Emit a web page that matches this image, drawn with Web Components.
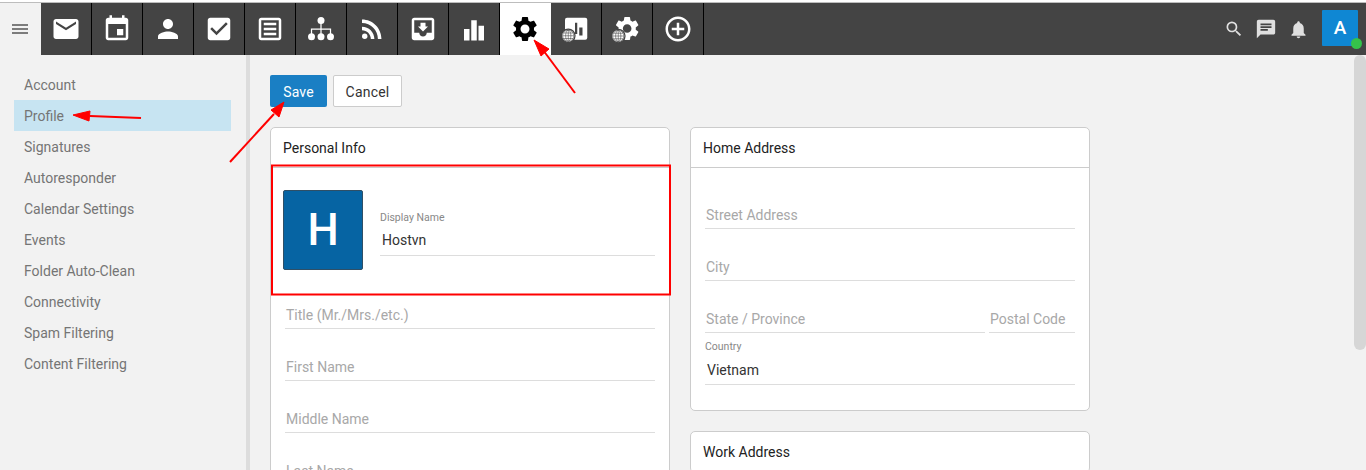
<!DOCTYPE html>
<html lang="en"><head><meta charset="utf-8"><title>Profile</title>
<style>
html,body{margin:0;height:470px;overflow:hidden;background:#f2f2f2;font-family:Roboto,"Liberation Sans",sans-serif;}
</style></head><body>
<app-shell>
  <top-bar slot="top">
    <nav-tab icon="mail"></nav-tab><nav-tab icon="event"></nav-tab><nav-tab icon="person"></nav-tab><nav-tab icon="check"></nav-tab><nav-tab icon="article"></nav-tab><nav-tab icon="tree"></nav-tab><nav-tab icon="rss"></nav-tab><nav-tab icon="inbox"></nav-tab><nav-tab icon="bars"></nav-tab><nav-tab icon="gear" active></nav-tab><nav-tab icon="report"></nav-tab><nav-tab icon="gearglobe"></nav-tab><nav-tab icon="add"></nav-tab>
  </top-bar>
  <side-menu slot="side">
    <menu-item>Account</menu-item><menu-item active>Profile</menu-item><menu-item>Signatures</menu-item><menu-item>Autoresponder</menu-item><menu-item>Calendar Settings</menu-item><menu-item>Events</menu-item><menu-item>Folder Auto-Clean</menu-item><menu-item>Connectivity</menu-item><menu-item>Spam Filtering</menu-item><menu-item>Content Filtering</menu-item>
  </side-menu>
  <profile-page slot="main">
    <form-card slot="left" title="Personal Info">
      <avatar-row><text-field style="--vb:6px" label="Display Name" value="Hostvn"></text-field></avatar-row>
      <div style="padding:7px 14px 0;display:block">
        <text-field placeholder="Title (Mr./Mrs./etc.)"></text-field>
        <text-field placeholder="First Name"></text-field>
        <text-field placeholder="Middle Name"></text-field>
        <text-field placeholder="Last Name"></text-field>
      </div>
    </form-card>
    <form-card slot="right" title="Home Address">
      <div style="padding:9px 14px 25px;display:block">
        <text-field placeholder="Street Address"></text-field>
        <text-field placeholder="City"></text-field>
        <div style="display:flex;gap:4px">
          <text-field style="flex:1" placeholder="State / Province"></text-field>
          <text-field style="width:86px" placeholder="Postal Code"></text-field>
        </div>
        <text-field label="Country" value="Vietnam"></text-field>
      </div>
    </form-card>
    <form-card slot="right" title="Work Address"></form-card>
  </profile-page>
</app-shell>
<script>
const P={
mail:'<path d="M20 4H4c-1.1 0-2 .9-2 2v12c0 1.1.9 2 2 2h16c1.1 0 2-.9 2-2V6c0-1.1-.9-2-2-2zm0 4l-8 5-8-5V6l8 5 8-5v2z"/>',
event:'<path d="M17 12h-5v5h5v-5zM16 1v2H8V1H6v2H5c-1.11 0-1.99.9-1.99 2L3 19c0 1.1.89 2 2 2h14c1.1 0 2-.9 2-2V5c0-1.1-.9-2-2-2h-1V1h-2zm3 18H5V8h14v11z"/>',
person:'<path d="M12 12c2.21 0 4-1.79 4-4s-1.79-4-4-4-4 1.79-4 4 1.79 4 4 4zm0 2c-2.67 0-8 1.34-8 4v2h16v-2c0-2.66-5.33-4-8-4z"/>',
check:'<path d="M19 3H5c-1.11 0-2 .9-2 2v14c0 1.1.89 2 2 2h14c1.11 0 2-.9 2-2V5c0-1.1-.89-2-2-2zm-9 14l-5-5 1.41-1.41L10 14.17l7.59-7.59L19 8l-9 9z"/>',
article:'<path d="M19 5v14H5V5h14m0-2H5c-1.1 0-2 .9-2 2v14c0 1.1.9 2 2 2h14c1.1 0 2-.9 2-2V5c0-1.1-.9-2-2-2zM7 7h10v2H7zM7 11h10v2H7zM7 15h10v2H7z"/>',
tree:'<circle cx="12" cy="5.2" r="2.8"/><circle cx="4.4" cy="18.2" r="2.8"/><circle cx="12" cy="18.2" r="2.8"/><circle cx="19.6" cy="18.2" r="2.8"/><path d="M11.5 7h1v4.6h7.6V16h-1v-3.4h-6.6V16h-1v-3.4H4.9V16h-1v-4.4h7.6z"/>',
rss:'<circle cx="6.18" cy="17.82" r="2.18"/><path d="M4 4.44v2.83c7.03 0 12.73 5.7 12.73 12.73h2.83c0-8.59-6.97-15.56-15.56-15.56zm0 5.66v2.83c3.9 0 7.07 3.17 7.07 7.07h2.83c0-5.47-4.43-9.9-9.9-9.9z"/>',
inbox:'<path d="M19 3H5c-1.1 0-2 .9-2 2v14c0 1.1.9 2 2 2h14c1.1 0 2-.9 2-2V5c0-1.1-.9-2-2-2zm0 12h-4c0 1.66-1.34 3-3 3s-3-1.34-3-3H4.99V5H19v10zm-3-5h-2V7h-4v3H8l4 4 4-4z"/>',
bars:'<path d="M4 12h4.4v9.2H4zM9.8 5h4.4v16.2H9.8zM15.6 9.4H20v11.8h-4.4z"/>',
gear:'<path d="M19.14 12.94c.04-.3.06-.61.06-.94 0-.32-.02-.64-.07-.94l2.03-1.58c.18-.14.23-.41.12-.61l-1.92-3.32c-.12-.22-.37-.29-.59-.22l-2.39.96c-.5-.38-1.03-.7-1.62-.94l-.36-2.54c-.04-.24-.24-.41-.48-.41h-3.84c-.24 0-.43.17-.47.41l-.36 2.54c-.59.24-1.13.57-1.62.94l-2.39-.96c-.22-.08-.47 0-.59.22L2.74 8.87c-.12.21-.08.47.12.61l2.03 1.58c-.05.3-.09.63-.09.94s.02.64.07.94l-2.03 1.58c-.18.14-.23.41-.12.61l1.92 3.32c.12.22.37.29.59.22l2.39-.96c.5.38 1.03.7 1.62.94l.36 2.54c.05.24.24.41.48.41h3.84c.24 0 .44-.17.47-.41l.36-2.54c.59-.24 1.13-.56 1.62-.94l2.39.96c.22.08.47 0 .59-.22l1.92-3.32c.12-.22.07-.47-.12-.61l-2.01-1.58zM12 15.6c-1.98 0-3.6-1.62-3.6-3.6s1.62-3.6 3.6-3.6 3.6 1.62 3.6 3.6-1.62 3.6-3.6 3.6z"/>',
add:'<path d="M13 7h-2v4H7v2h4v4h2v-4h4v-2h-4V7zm-1-5C6.48 2 2 6.48 2 12s4.48 10 10 10 10-4.48 10-10S17.52 2 12 2zm0 18c-4.41 0-8-3.59-8-8s3.59-8 8-8 8 3.59 8 8-3.59 8-8 8z"/>'
};
const GLOBE=(x,y)=>`<g transform="translate(${x} ${y})"><circle r="5.4" fill="#fff" stroke="#444" stroke-width="1"/><g fill="none" stroke="#444" stroke-width=".45"><circle r="4.5"/><ellipse rx="2.1" ry="4.5"/><path d="M-4.5 0h9M-3.9-2.2h7.8M-3.9 2.2h7.8M0-4.5v9"/></g></g>`;
P.report=`<rect x="3.2" y="3" width="17.8" height="17.6" rx="1.6"/><path fill="#444" d="M11.2 7h1.8v9h-1.8zM14.6 10.8h2.6v6.4h-2.6z"/>`+GLOBE(5.8,17.4);
P.gearglobe=`<g transform="translate(.6 .1) scale(.96)">${P.gear}</g>`+GLOBE(5,17.6);

function def(name,html,init){
  customElements.define(name,class extends HTMLElement{
    constructor(){super();const r=this.attachShadow({mode:'open'});r.innerHTML=html;}
    connectedCallback(){init&&init.call(this,this.shadowRoot);}
  });
}
def('app-shell',`<style>
:host{display:block;position:relative;width:1366px;height:470px;overflow:hidden;background:#f2f2f2;color:#333;font:14px/1.2 Roboto,"Liberation Sans",sans-serif}
.edge{height:2px;background:#fff;border-bottom:1px solid #bdbdbd;box-sizing:content-box}
.body{display:flex;height:415px}
.scroll{width:12px;flex:none}
.thumb{height:295px;background:#d6d6d6;border-radius:6px;margin-top:0}
main{flex:1;min-width:0;overflow:hidden}
svg.notes{position:absolute;left:0;top:0;pointer-events:none}
</style>
<div class="edge"></div>
<slot name="top"></slot>
<div class="body"><slot name="side"></slot><main><slot name="main"></slot></main><div class="scroll"><div class="thumb"></div></div></div>
<svg class="notes" width="1366" height="470" viewBox="0 0 1366 470">
<rect x="272" y="165.5" width="398" height="129" fill="none" stroke="#f00" stroke-width="2"/>
<g fill="#f00" stroke="#f00">
<path d="M575 93 L543 50" stroke-width="2"/><path d="M534 40 L549 49 L541 56z" stroke-width="1"/>
<path d="M141 118 L90 116" stroke-width="2"/><path d="M73 115 L90 111 L89 121z" stroke-width="1"/>
<path d="M230 162 L274 114" stroke-width="2"/><path d="M284 102 L279 117 L271 110z" stroke-width="1"/>
</g></svg>`);
def('top-bar',`<style>
:host{display:flex;height:52px;background:#444}
.menu{width:40px;padding-right:1px;background:#f2f2f2;display:flex;align-items:center;justify-content:center;flex:none}
.tabs{display:flex}
.right{margin-left:auto;display:flex;align-items:center;padding-right:8px}
.right svg{fill:#e0e0e0;display:block;flex:none}
.av{position:relative;width:36px;height:36px;background:#0f87d3;color:#fff;font:500 19px/36px Roboto,sans-serif;text-align:center;margin-left:13px;margin-top:-2px;border-radius:1px}
.dot{position:absolute;right:-4px;bottom:-3px;width:11px;height:11px;border-radius:50%;background:#35c24a}
</style>
<div class="menu"><svg width="18" height="18" viewBox="0 0 18 18" fill="#555"><path d="M1 4.2h16v1.6H1zM1 8.2h16v1.6H1zM1 12.2h16v1.6H1z"/></svg></div>
<div class="tabs"><slot></slot></div>
<div class="right">
<svg width="20" height="20" viewBox="0 0 24 24" style="margin-right:11px"><path d="M15.5 14h-.79l-.28-.27A6.47 6.47 0 0 0 16 9.5 6.5 6.5 0 1 0 9.5 16c1.61 0 3.09-.59 4.23-1.57l.27.28v.79l5 4.99L20.49 19l-4.99-5zm-6 0C7.01 14 5 11.99 5 9.5S7.01 5 9.5 5 14 7.01 14 9.5 11.99 14 9.5 14z"/></svg>
<svg width="22" height="22" viewBox="0 0 24 24" style="margin-right:11px"><path d="M20 2H4c-1.1 0-1.99.9-1.99 2L2 22l4-4h14c1.1 0 2-.9 2-2V4c0-1.1-.9-2-2-2zM6 9h12v2H6V9zm8 5H6v-2h8v2zm4-6H6V6h12v2z"/></svg>
<svg width="21" height="21" viewBox="0 0 24 24"><path d="M12 22c1.1 0 2-.9 2-2h-4c0 1.1.9 2 2 2zm6-6v-5c0-3.07-1.63-5.64-4.5-6.32V4c0-.83-.67-1.5-1.5-1.5s-1.5.67-1.5 1.5v.68C7.64 5.36 6 7.92 6 11v5l-2 2v1h16v-1l-2-2z"/></svg>
<div class="av">A<span class="dot"></span></div>
</div>`);
def('nav-tab',`<style>
:host{display:flex;width:50px;height:52px;box-sizing:content-box;border-right:1px solid #000;align-items:center;justify-content:center;background:#444}
:host([active]){background:#fff;border-right-color:#fff}
svg{fill:#fff;display:block}
:host([active]) svg{fill:#000}
</style><svg width="30" height="30" viewBox="0 0 24 24"></svg>`,function(r){r.querySelector('svg').innerHTML=P[this.getAttribute('icon')]||'';});
def('side-menu',`<style>
:host{display:block;width:246px;flex:none;box-sizing:content-box;border-right:4px solid #ddd;padding:14px 0 0;height:401px}
</style><slot></slot>`);
def('menu-item',`<style>
:host{display:block;margin:0 15px 0 14px;height:31px;line-height:33px;padding-left:10px;color:#757575;font-size:14px}
:host([active]){background:#c7e4f2}
</style><slot></slot>`);
def('profile-page',`<style>
:host{display:block;padding:20px 0 0 20px}
.bar{display:flex;gap:6px;height:32px;margin-bottom:20px}
button{font:14px/16px Roboto,sans-serif;border-radius:2px;padding:2px 0 0;height:32px;letter-spacing:.2px}
.save{width:57px;background:#1a7fc4;color:#fff;border:0}
.cancel{width:69px;background:#fff;color:#333;border:1px solid #ccc}
.cols{display:flex;gap:20px;align-items:flex-start}
.col{width:400px;display:flex;flex-direction:column;gap:20px}
</style>
<div class="bar"><button class="save">Save</button><button class="cancel">Cancel</button></div>
<div class="cols"><div class="col"><slot name="left"></slot></div><div class="col"><slot name="right"></slot></div></div>`);
def('form-card',`<style>
:host{display:block;background:#fff;border:1px solid #ccc;border-radius:5px;box-sizing:border-box}
.h{height:39px;line-height:41px;padding-left:12px;border-bottom:1px solid #ccc;color:#222;font-size:14px;box-sizing:content-box}
</style><div class="h"></div><slot></slot>`,function(r){r.querySelector('.h').textContent=this.getAttribute('title');});
def('avatar-row',`<style>
:host{display:flex;padding:22px 14px 0 12px;align-items:flex-start;height:80px}
.a{width:78px;height:78px;border:1px solid #2f4f66;border-radius:2px;background:#0664a3;color:#fff;font:500 44px/78px Roboto,sans-serif;text-align:center;margin-right:17px;flex:none}
.f{flex:1;margin-top:14px}
</style><div class="a">H</div><div class="f"><slot></slot></div>`);
def('text-field',`<style>
:host{display:block;height:52px;box-sizing:border-box;border-bottom:1px solid #ddd;position:relative;font-size:14px}
.l{position:absolute;left:0;bottom:31px;font-size:10.5px;line-height:12px;color:#888}
.v{position:absolute;left:2px;bottom:var(--vb,5px);line-height:18px;color:#333;white-space:nowrap}
.p{left:1px;bottom:4px;color:#a8a8a8}
</style><div class="l"></div><div class="v"></div>`,function(r){
 const l=r.querySelector('.l'),v=r.querySelector('.v');
 l.textContent=this.getAttribute('label')||'';
 if(this.hasAttribute('value')){v.textContent=this.getAttribute('value');}
 else{v.textContent=this.getAttribute('placeholder')||'';v.classList.add('p');}
});
</script>
</body></html>
